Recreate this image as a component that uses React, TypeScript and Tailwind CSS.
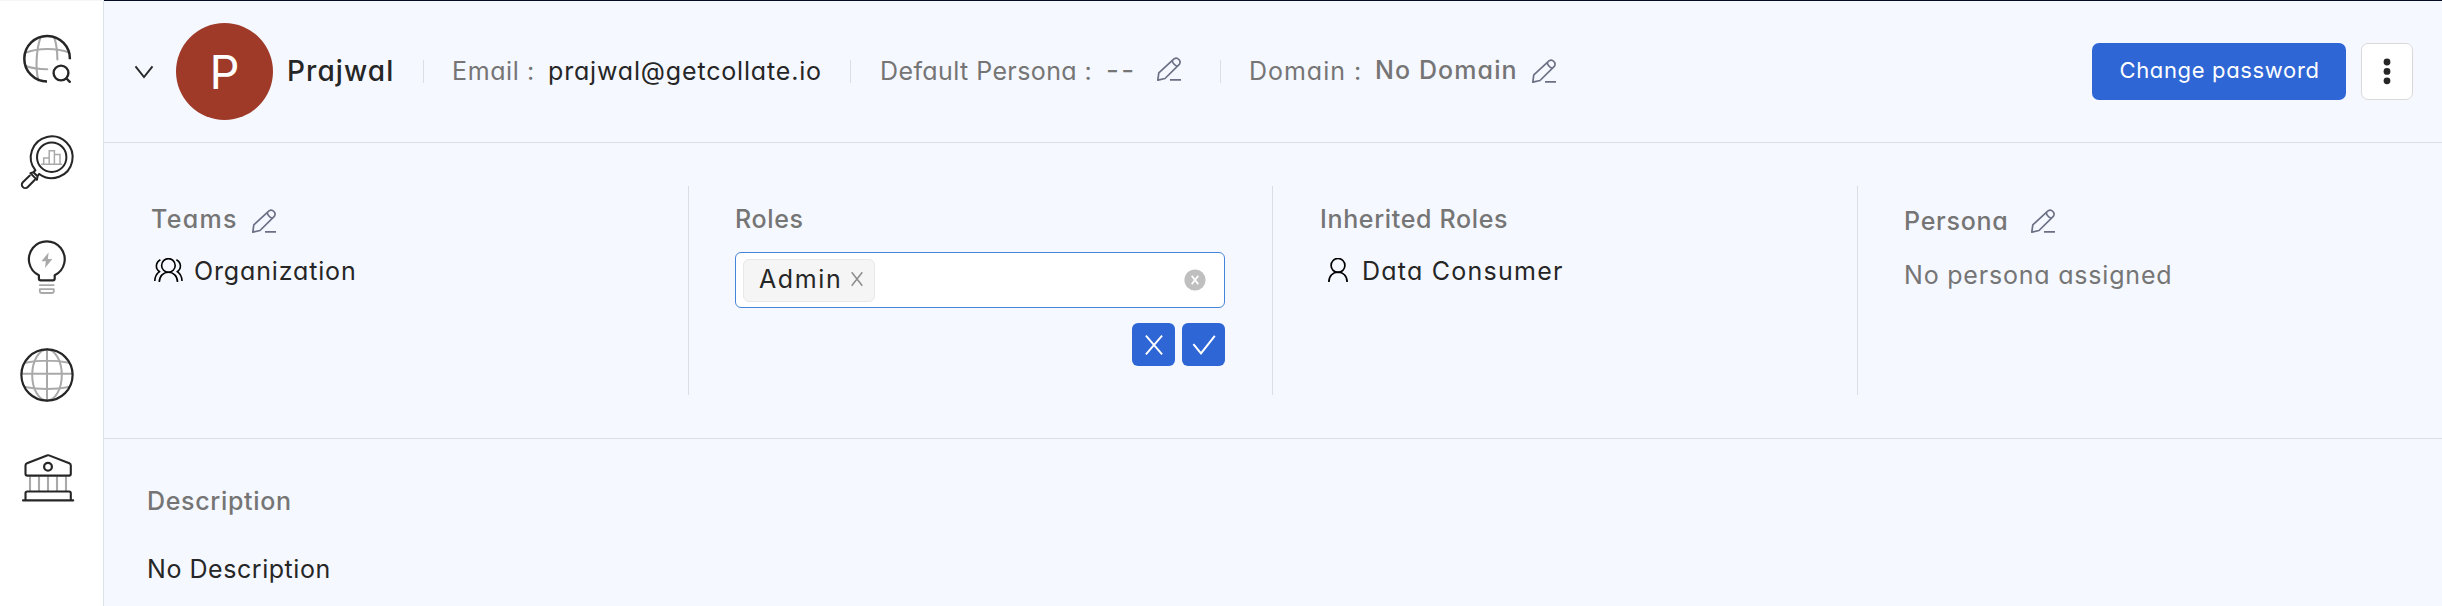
import type { ReactNode } from 'react';

const dark = '#262626';
const faint = '#a9a9a9';

function SideIcon({ viewBox, children }: { viewBox: string; children: ReactNode }) {
  return (
    <svg viewBox={viewBox} className="size-[60px] shrink-0" fill="none" stroke={dark} strokeWidth="2.1" strokeLinecap="round" strokeLinejoin="round">
      {children}
    </svg>
  );
}

function Sidebar() {
  return (
    <nav className="flex w-[104px] shrink-0 flex-col border-t border-r border-t-[#f5f5f5] border-r-[#dde1e8] bg-white pt-7 pl-[17px]">
      <SideIcon viewBox="17 29 60 60">
        <g stroke={faint}>
          <path d="M40.5 37.5C36.5 49 35 68 38.5 80.5M54.3 37.5C56.5 44 57.3 52 57.4 59.4" />
          <path d="M26.5 52.4C38 47.8 57 47.8 69.3 52.6M25.5 66C32 68.3 39 69.2 47.3 69.3" />
        </g>
        <path d="M69.9 59.3A22.8 22.8 0 1 0 47 81.5" strokeWidth="2.5" strokeLinecap="butt" />
        <circle cx="61" cy="73" r="7.4" strokeWidth="2.4" />
        <path d="M66.5 78.5L69.8 81.8" strokeWidth="2.4" />
      </SideIcon>
      <span className="h-[43px]" />
      <SideIcon viewBox="17 132 60 60">
        <g stroke={faint} strokeWidth="1.5" strokeLinejoin="miter">
          <path d="M41.6 164.3H61.6M43.7 164V158H49.2M49.2 164V150.7H54.4V164M54.4 154.6H60V164" />
        </g>
        <circle cx="51.7" cy="157.2" r="14.7" strokeWidth="2" />
        <path d="M35.3 170.2A20.9 20.9 0 1 1 39.2 174" strokeWidth="2" />
        <path d="M35.3 170.2L33.4 172.2L30.4 173.1L36.9 179.9L37.6 176.2L39.2 174M33.4 172.2L37.5 176.3" strokeWidth="2" />
        <path d="M29.8 175.6L22.8 182.2A3.4 3.4 0 0 0 27.8 187L34.9 179.7" strokeWidth="2" />
      </SideIcon>
      <span className="h-[45px]" />
      <SideIcon viewBox="17 237 60 60">
        <path d="M38.9 275.3A17.9 17.9 0 1 1 54.7 275.3V278.6Q54.7 280.4 52.9 280.4H40.7Q38.9 280.4 38.9 278.6Z" strokeWidth="2.2" />
        <path d="M48.6 252.4L41.4 261.3H45.8L45 268L52.4 258.9H47.9Z" fill={faint} stroke="none" />
        <path d="M39.8 285.1H53.8M39.8 289.2H53.8V291Q53.8 293 51.8 293H41.8Q39.8 293 39.8 291Z" stroke={faint} strokeWidth="1.8" />
      </SideIcon>
      <span className="h-12" />
      <SideIcon viewBox="17 345 60 60">
        <g stroke={faint} strokeWidth="2">
          <ellipse cx="47" cy="375" rx="14.8" ry="25.5" />
          <path d="M47 349V401M21.5 373.8H72.5M25 362.8C38 360.2 56 360.2 69 362.8M25 387C38 389.7 56 389.7 69 387" />
        </g>
        <circle cx="47" cy="375" r="25.6" strokeWidth="2.2" />
      </SideIcon>
      <span className="h-[43px]" />
      <SideIcon viewBox="17 448 60 60">
        <path d="M30 476.5V491M39 476.5V491M48 476.5V491M57 476.5V491M66 476.5V491" stroke={faint} strokeLinecap="butt" />
        <path d="M25.5 465.5Q25.5 463.8 27 463.2L47 455.4Q48 455 49 455.4L69.3 463.2Q70.8 463.8 70.8 465.5V473.8Q70.8 475.6 69 475.6H27.3Q25.5 475.6 25.5 473.8Z" />
        <circle cx="48" cy="466.7" r="3.9" strokeWidth="2.2" />
        <path d="M25.5 500V493.3Q25.5 491.5 27.3 491.5H69Q70.8 491.5 70.8 493.3V500M23 500.4H73.2" />
      </SideIcon>
    </nav>
  );
}

function EditIcon({ className = '' }: { className?: string }) {
  return (
    <svg viewBox="0 0 24 24" className={`size-6 shrink-0 ${className}`} fill="none" stroke="#6b7085" strokeWidth="1.7" strokeLinejoin="round">
      <path d="M.8 23.2L1.8 15.8L17 1.9A3.9 3.9 0 0 1 22.3 7.4L8 21.5Z" />
      <path d="M15.2 3.6C15.8 6.3 17.4 8.2 20.3 9.2M13 22.9H24" />
    </svg>
  );
}

function UserIcon() {
  return (
    <svg viewBox="0 0 20 24" className="h-6 w-5 shrink-0" fill="none" stroke="#000" strokeWidth="1.7">
      <circle cx="10" cy="7.4" r="6.9" />
      <path d="M.9 24C.9 17.8 5 14.2 10 14.2S19.1 17.8 19.1 24" />
    </svg>
  );
}

function TeamIcon() {
  return (
    <svg viewBox="0 0 29 24" className="h-6 w-[29px] shrink-0" fill="none" stroke="#000" strokeWidth="1.6">
      <circle cx="14.4" cy="7.4" r="6.8" />
      <path d="M5.3 24C5.3 18 9.5 14.2 14.4 14.2S23.5 18 23.5 24" />
      <path d="M6.4 1.8C1.4 4.6 1 10.6 5.6 13.8M6.2 13.2C2.6 15.6.8 18.8.8 23" />
      <path d="M22.4 1.8C27.4 4.6 27.8 10.6 23.2 13.8M22.6 13.2C26.2 15.6 28 18.8 28 23" />
    </svg>
  );
}

function Divider() {
  return <span className="h-[23px] w-px shrink-0 bg-[#dbdee5]" />;
}

const label = 'text-[25px] leading-[30px] whitespace-nowrap text-[#757575]';
const value = 'text-[25px] leading-[30px] whitespace-nowrap text-[#262626]';

function Header() {
  return (
    <header className="flex h-[143px] shrink-0 items-center border-t border-b border-t-[#020d24] border-b-[#dbdee5] pr-[29px] pl-[30px]">
      <svg viewBox="0 0 20 14" className="h-[14px] w-5 shrink-0" fill="none" stroke={dark} strokeWidth="1.9">
        <path d="M1.5 1.4L10 12L18.5 1.4" />
      </svg>
      <div className="ml-[22px] flex size-[97px] shrink-0 items-center justify-center rounded-full bg-[#9f3a28] text-[47px] leading-none font-normal text-white">P</div>
      <h1 className="mb-0.5 ml-[14px] w-[136px] shrink-0 text-[28px] leading-[34px] font-medium tracking-[1.1px] text-[#262626]">Prajwal</h1>
      <Divider />
      <span className={`${label} mb-0.5 ml-[28px] w-[96px] shrink-0 tracking-[0.6px]`}>Email :</span>
      <span className={`${value} mb-0.5 w-[302px] shrink-0 tracking-[0.83px]`}>prajwal@getcollate.io</span>
      <Divider />
      <span className={`${label} mb-0.5 ml-[29px] w-[226px] shrink-0 tracking-[0.41px]`}>Default Persona :</span>
      <span className="mb-1 w-[51px] shrink-0 text-[28px] leading-[30px] tracking-[2.4px] text-[#757575]">--</span>
      <EditIcon className="-mt-[5px]" />
      <span className="w-[39px] shrink-0" />
      <Divider />
      <span className={`${label} mb-0.5 ml-[28px] w-[126px] shrink-0 tracking-[0.98px]`}>Domain :</span>
      <span className={`${label} mb-1 w-[157px] shrink-0 font-medium tracking-[1.1px]`}>No Domain</span>
      <EditIcon className="-mt-px" />
      <button className="ml-auto flex h-[57px] w-[254px] shrink-0 items-center justify-center rounded-[7px] bg-[#2e66d5] pb-[3px] pl-px text-[22px] leading-7 tracking-[0.65px] text-white">
        Change password
      </button>
      <button className="ml-[15px] flex h-[57px] w-[52px] shrink-0 items-center justify-center rounded-[7px] border border-[#d9d9d9] bg-white">
        <svg viewBox="0 0 8 27" className="h-[27px] w-2" fill={dark}>
          <circle cx="4" cy="4" r="3.4" />
          <circle cx="4" cy="13.4" r="3.4" />
          <circle cx="4" cy="22.8" r="3.4" />
        </svg>
      </button>
    </header>
  );
}

function RolesEditor() {
  return (
    <div className="w-[490px]">
      <div className="mt-[18px] flex h-14 items-center rounded-[6px] border border-[#4485dc] bg-white pr-[18px] pl-[7px]">
        <div className="flex h-[43px] w-[132px] items-center rounded-[6px] border border-[#e8e8e8] bg-[#f5f5f5] pl-[15px]">
          <span className={`${value} -mt-0.5 w-[91px] tracking-[1.6px]`}>Admin</span>
          <svg viewBox="0 0 14 16" className="-mt-[3px] h-4 w-[14px]" fill="none" stroke="#8c8c8c" strokeWidth="1.5">
            <path d="M1.7 1.2L12.3 14.8M12.3 1.2L1.7 14.8" />
          </svg>
        </div>
        <svg viewBox="0 0 22 22" className="ml-auto size-[22px]" fill="#bfbfbf">
          <circle cx="11" cy="11" r="10.6" />
          <path d="M7.7 6.8L14.3 15.2M14.3 6.8L7.7 15.2" stroke="#fff" strokeWidth="1.8" />
        </svg>
      </div>
      <div className="mt-[15px] flex justify-end gap-[7px]">
        <button className="flex size-[43px] items-center justify-center rounded-[6px] bg-[#2e66d5]">
          <svg viewBox="0 0 20 20" className="size-5" fill="none" stroke="#fff" strokeWidth="1.9">
            <path d="M1.9 .6L18.1 19.4M18.1 .6L1.9 19.4" />
          </svg>
        </button>
        <button className="flex size-[43px] items-center justify-center rounded-[6px] bg-[#2e66d5]">
          <svg viewBox="0 0 24 20" className="h-5 w-6" fill="none" stroke="#fff" strokeWidth="2">
            <path d="M1.4 9.2L9 18.4L22.8 .9" />
          </svg>
        </button>
      </div>
    </div>
  );
}

function Details() {
  const column = 'flex flex-col border-l border-[#dbdee5] pt-[18px] pl-[46px]';
  return (
    <section className="grid h-[296px] shrink-0 grid-cols-[584px_584px_585px_1fr] border-b border-[#dbdee5] py-[43px]">
      <div className="flex flex-col pt-[18px] pl-[47px]">
        <div className="flex">
          <h2 className={`${label} w-[101px] font-medium tracking-[1.3px]`}>Teams</h2>
          <EditIcon className="mt-[5px]" />
        </div>
        <div className="mt-[22px] flex pl-[3px]">
          <span className="mt-0.5 flex"><TeamIcon /></span>
          <span className={`${value} ml-[11px] tracking-[0.85px]`}>Organization</span>
        </div>
      </div>
      <div className={column}>
        <h2 className={`${label} font-medium tracking-[0.64px]`}>Roles</h2>
        <RolesEditor />
      </div>
      <div className={column}>
        <h2 className={`${label} ml-px font-medium tracking-[0.65px]`}>Inherited Roles</h2>
        <div className="mt-[22px] flex pl-[9px]">
          <span className="mt-0.5 flex"><UserIcon /></span>
          <span className={`${value} ml-[14px] tracking-[1.24px]`}>Data Consumer</span>
        </div>
      </div>
      <div className={column}>
        <div className="flex">
          <h2 className={`${label} mt-0.5 w-[127px] font-medium tracking-[0.75px]`}>Persona</h2>
          <EditIcon className="mt-[5px]" />
        </div>
        <span className={`${label} mt-6 tracking-[0.8px]`}>No persona assigned</span>
      </div>
    </section>
  );
}

export default function App() {
  return (
    <div className="flex h-[606px] w-[2442px] overflow-hidden bg-[#f5f8ff] font-['Inter',sans-serif] [font-feature-settings:'cv11']">
      <Sidebar />
      <main className="flex min-w-0 flex-1 flex-col">
        <Header />
        <Details />
        <section className="pt-[47px] pl-[43px]">
          <h2 className={`${label} font-medium tracking-[0.67px]`}>Description</h2>
          <p className={`${value} mt-[38px] tracking-[0.55px]`}>No Description</p>
        </section>
      </main>
    </div>
  );
}
